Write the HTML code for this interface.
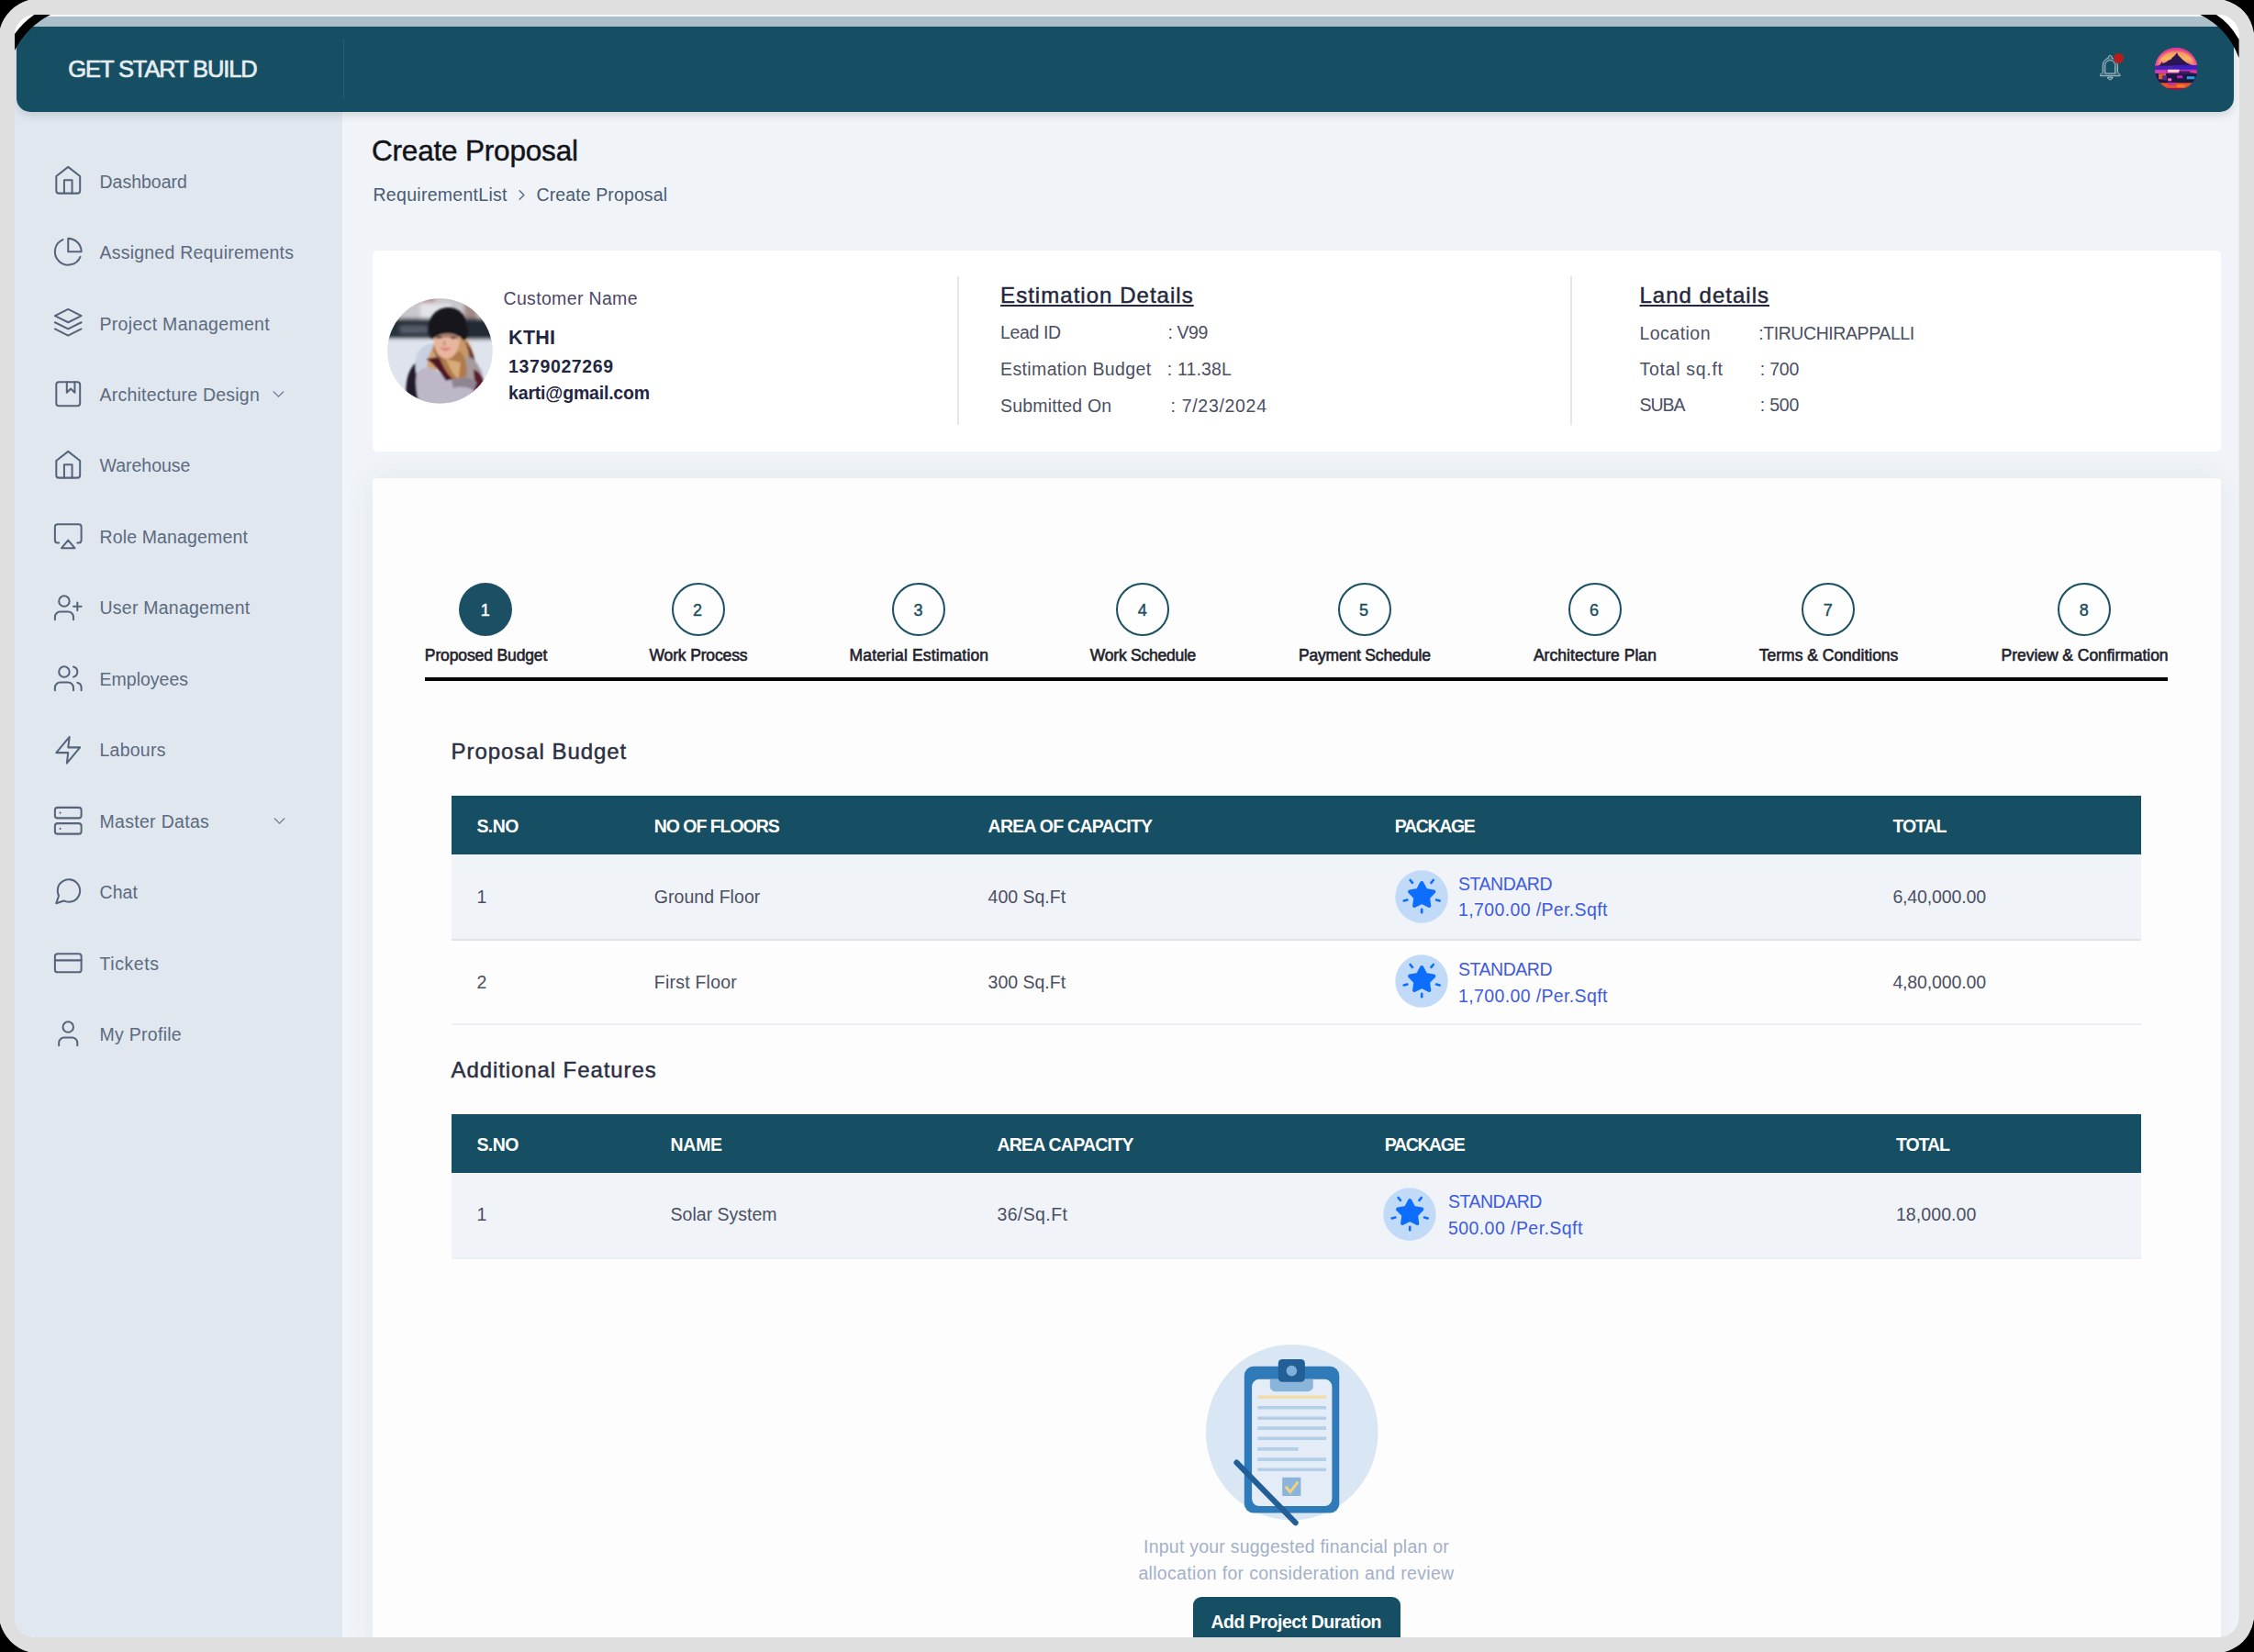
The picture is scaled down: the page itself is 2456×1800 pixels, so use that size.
<!DOCTYPE html>
<html lang="en"><head><meta charset="utf-8"><title>Create Proposal</title>
<style>
html,body{margin:0;padding:0}
body{width:2456px;height:1800px;overflow:hidden;background:#dfdfdf;position:relative;font-family:"Liberation Sans",sans-serif}
.abs,.t,.ic{position:absolute}
.t{white-space:pre;display:block}
</style></head>
<body>
<div class="abs" style="left:0;top:0;width:2456px;height:1800px;background:#dfdfdf"></div>
<svg class="abs" style="left:0;top:0" width="2456" height="1800" viewBox="0 0 2456 1800"><path d="M0,0 L31,0 A45.3,45.3 0 0 0 0,31 Z M2456,0 L2423.8,0 Q2451.1,8 2456,36 Z M0,1800 L0,1768.6 A45.3,45.3 0 0 0 31.3,1800 Z M2456,1800 L2456,1764.2 Q2451.1,1792 2424,1800 Z" fill="#000"/></svg>
<div class="abs" id="screen" style="left:0;top:0;width:2456px;height:1800px;clip-path:inset(16px 16.4px 16.1px 16px round 22px);">
<div class="abs" style="left:16.00px;top:16.00px;width:2424.00px;height:1768.00px;background:#f0f4f8;"></div>
<div class="abs" style="left:16.00px;top:16.00px;width:356.80px;height:1768.00px;background:#e0e7ef;"></div>
<div class="abs" style="left:16.00px;top:56.00px;width:2.00px;height:68.00px;background:#e0e7ef;"></div>
<div class="abs" style="left:2434.00px;top:56.00px;width:6.00px;height:68.00px;background:#f0f4f8;"></div>
<div class="abs" style="left:18.00px;top:16.00px;width:2416.00px;height:105.60px;background:linear-gradient(#f4f7fb 0,#f4f7fb 1.9px,#adc0ca 2.1px,#adc0ca 12.6px,#164f63 12.9px,#164f63 100%);border-radius:0 0 15px 15px;box-shadow:0 4px 8px rgba(40,52,70,.15);"></div>
<svg class="abs" style="left:0;top:0" width="2456" height="80" viewBox="0 0 2456 80"><polygon points="14,14 39,14 14,39" fill="#fff"/><polygon points="2442,14 2413,14 2442,44" fill="#fff"/><path d="M15,37 L16,37 Q24.8,24.8 37.3,16 L37.3,15 L55,15 L55,16 A90,90 0 0 0 16,55 L15,55 Z" fill="#000"/><path d="M2414.8,15 L2414.8,16 Q2429,24.7 2439.3,42.5 L2441,42.5 L2441,62.5 L2439.3,62.5 A85,85 0 0 0 2397.4,16 L2397.4,15 Z" fill="#000"/></svg>
<div class="abs" style="left:373.60px;top:42.90px;width:1.50px;height:65.10px;background:rgba(255,255,255,.09);"></div>
<svg class="abs" style="left:2283.2px;top:57.3px" width="32.5" height="32.5" viewBox="0 0 24 24" fill="#9fb8c2" fill-opacity=".28" stroke="#cddbe1" stroke-width="0.6" stroke-linejoin="round"><path d="M12 22c1.1 0 2-.9 2-2h-4c0 1.1.9 2 2 2zm6-6v-5c0-3.07-1.630-5.640-4.500-6.320V4c0-.83-.67-1.500-1.500-1.500s-1.500.67-1.500 1.500v.68C7.640 5.360 6 7.920 6 11v5l-2 2v1h16v-1l-2-2zm-2 1H8v-6c0-2.480 1.510-4.500 4-4.500s4 2.020 4 4.500v6z"/></svg>
<div class="abs" style="left:2302.6px;top:57.8px;width:11px;height:11px;border-radius:50%;background:#b81c1c"></div>
<svg class="abs" style="left:2348.00px;top:52.20px" width="46.40" height="46.40" viewBox="0 0 46 46">
<defs><clipPath id="pav"><circle cx="23" cy="23" r="23"/></clipPath>
<linearGradient id="pg1" x1="0" y1="0" x2="0" y2="1">
<stop offset="0" stop-color="#e84a90"/><stop offset="0.12" stop-color="#f59a5e"/><stop offset="0.26" stop-color="#fbb862"/>
<stop offset="0.40" stop-color="#f0707c"/><stop offset="0.46" stop-color="#5a25b8"/><stop offset="1" stop-color="#5a25b8"/></linearGradient>
<radialGradient id="pg2" gradientUnits="userSpaceOnUse" cx="23" cy="25" r="24"><stop offset="0.84" stop-color="#e6349a" stop-opacity="0"/><stop offset="1" stop-color="#e6349a" stop-opacity="1"/></radialGradient>
<filter id="bl3" x="-10%" y="-10%" width="120%" height="120%"><feGaussianBlur stdDeviation="0.55"/></filter></defs>
<g clip-path="url(#pav)"><rect width="46" height="46" fill="url(#pg1)"/>
<rect width="46" height="22" fill="url(#pg2)"/>
<g filter="url(#bl3)">
<polygon points="23.9,5.2 25,8 27,10 30,13 34,16 38,18 45.6,20.5 46,22 0,22 2.2,20.5 6,18 7.5,14.8 8.6,17 12,15.5 15,13.5 17,13 19,10.5 21,9 22.6,7" fill="#2c1852"/>
<rect x="-1" y="19.5" width="48" height="4.4" fill="#4a22b4"/>
<rect x="20" y="19" width="26" height="4" fill="#3d1cc4"/>
<rect x="-1" y="23.6" width="48" height="4.6" fill="#b431b8"/>
<rect x="0" y="24" width="12" height="4" fill="#cf3fae"/>
<rect x="14" y="23.6" width="12.4" height="3" fill="#fbd0c0"/>
<rect x="26" y="25.4" width="16" height="2.6" fill="#3a1a60"/>
<rect x="38" y="25" width="6" height="2" fill="#e8407c"/>
<rect x="-1" y="28" width="48" height="10.5" fill="#1c1440"/>
<rect x="4" y="28" width="8" height="6" fill="#d9603e"/>
<rect x="8" y="30" width="5" height="5" fill="#5a2a80"/>
<rect x="14" y="33" width="4" height="3" fill="#f06ad0"/>
<rect x="24" y="30" width="6" height="3" fill="#b02ab8"/>
<rect x="34.5" y="31" width="8.5" height="3" fill="#22a6e0"/>
<rect x="-1" y="38" width="48" height="6" fill="#e8522c"/>
<rect x="14" y="37.5" width="8" height="3" fill="#c030a0"/>
<rect x="24" y="40" width="8" height="3" fill="#fa7a2a"/>
<rect x="-1" y="43.5" width="48" height="4" fill="#8a1f4a"/>
</g></g></svg>
<svg class="ic" style="left:57.150000000000006px;top:179.25px" width="34.5" height="34.5" viewBox="0 0 24 24" fill="none" stroke="#55647a" stroke-width="1.4" stroke-linecap="round" stroke-linejoin="round"><path d="M3 9l9-7 9 7v11a2 2 0 0 1-2 2H5a2 2 0 0 1-2-2z"/><polyline points="9 22 9 12 15 12 15 22"/></svg>
<svg class="ic" style="left:57.150000000000006px;top:256.7px" width="34.5" height="34.5" viewBox="0 0 24 24" fill="none" stroke="#55647a" stroke-width="1.4" stroke-linecap="round" stroke-linejoin="round"><path d="M21.21 15.89A10 10 0 1 1 8 2.83"/><path d="M22 12A10 10 0 0 0 12 2v10z"/></svg>
<svg class="ic" style="left:57.150000000000006px;top:334.15000000000003px" width="34.5" height="34.5" viewBox="0 0 24 24" fill="none" stroke="#55647a" stroke-width="1.4" stroke-linecap="round" stroke-linejoin="round"><polygon points="12 2 2 7 12 12 22 7 12 2"/><polyline points="2 17 12 22 22 17"/><polyline points="2 12 12 17 22 12"/></svg>
<svg class="ic" style="left:57.150000000000006px;top:411.6px" width="34.5" height="34.5" viewBox="0 0 24 24" fill="none" stroke="#55647a" stroke-width="1.4" stroke-linecap="round" stroke-linejoin="round"><rect x="3" y="3" width="18" height="18" rx="2" ry="2"/><polyline points="11 3 11 11 14 8 17 11 17 3"/></svg>
<svg class="ic" style="left:57.150000000000006px;top:489.05px" width="34.5" height="34.5" viewBox="0 0 24 24" fill="none" stroke="#55647a" stroke-width="1.4" stroke-linecap="round" stroke-linejoin="round"><path d="M3 9l9-7 9 7v11a2 2 0 0 1-2 2H5a2 2 0 0 1-2-2z"/><polyline points="9 22 9 12 15 12 15 22"/></svg>
<svg class="ic" style="left:57.150000000000006px;top:566.5px" width="34.5" height="34.5" viewBox="0 0 24 24" fill="none" stroke="#55647a" stroke-width="1.4" stroke-linecap="round" stroke-linejoin="round"><path d="M5 17H4a2 2 0 0 1-2-2V5a2 2 0 0 1 2-2h16a2 2 0 0 1 2 2v10a2 2 0 0 1-2 2h-1"/><polygon points="12 15 17 21 7 21 12 15"/></svg>
<svg class="ic" style="left:57.150000000000006px;top:644.8500000000001px" width="34.5" height="34.5" viewBox="0 0 24 24" fill="none" stroke="#55647a" stroke-width="1.4" stroke-linecap="round" stroke-linejoin="round"><path d="M16 21v-2a4 4 0 0 0-4-4H6a4 4 0 0 0-4 4v2"/><circle cx="9" cy="7" r="4"/><line x1="19" y1="8" x2="19" y2="14"/><line x1="22" y1="11" x2="16" y2="11"/></svg>
<svg class="ic" style="left:57.150000000000006px;top:722.3px" width="34.5" height="34.5" viewBox="0 0 24 24" fill="none" stroke="#55647a" stroke-width="1.4" stroke-linecap="round" stroke-linejoin="round"><path d="M16 21v-2a4 4 0 0 0-4-4H6a4 4 0 0 0-4 4v2"/><circle cx="9" cy="7" r="4"/><path d="M22 21v-2a4 4 0 0 0-3-3.87"/><path d="M16 3.13a4 4 0 0 1 0 7.75"/></svg>
<svg class="ic" style="left:57.150000000000006px;top:799.75px" width="34.5" height="34.5" viewBox="0 0 24 24" fill="none" stroke="#55647a" stroke-width="1.4" stroke-linecap="round" stroke-linejoin="round"><polygon points="13 2 3 14 12 14 11 22 21 10 12 10 13 2"/></svg>
<svg class="ic" style="left:57.150000000000006px;top:876.6px" width="34.5" height="34.5" viewBox="0 0 24 24" fill="none" stroke="#55647a" stroke-width="1.4" stroke-linecap="round" stroke-linejoin="round"><rect x="2" y="2" width="20" height="8" rx="2" ry="2"/><rect x="2" y="14" width="20" height="8" rx="2" ry="2"/><line x1="6" y1="6" x2="6.01" y2="6"/><line x1="6" y1="18" x2="6.01" y2="18"/></svg>
<svg class="ic" style="left:57.150000000000006px;top:954.0500000000001px" width="34.5" height="34.5" viewBox="0 0 24 24" fill="none" stroke="#55647a" stroke-width="1.4" stroke-linecap="round" stroke-linejoin="round"><path d="M21 11.5a8.38 8.38 0 0 1-.9 3.8 8.5 8.5 0 0 1-7.6 4.7 8.38 8.38 0 0 1-3.8-.9L3 21l1.9-5.7a8.38 8.38 0 0 1-.9-3.8 8.5 8.5 0 0 1 4.7-7.6 8.38 8.38 0 0 1 3.8-.9h.5a8.48 8.48 0 0 1 8 8v.5z"/></svg>
<svg class="ic" style="left:57.150000000000006px;top:1031.5px" width="34.5" height="34.5" viewBox="0 0 24 24" fill="none" stroke="#55647a" stroke-width="1.4" stroke-linecap="round" stroke-linejoin="round"><rect x="2" y="5" width="20" height="14" rx="2"/><line x1="2" y1="10" x2="22" y2="10"/></svg>
<svg class="ic" style="left:57.150000000000006px;top:1108.95px" width="34.5" height="34.5" viewBox="0 0 24 24" fill="none" stroke="#55647a" stroke-width="1.4" stroke-linecap="round" stroke-linejoin="round"><path d="M19 21v-2a4 4 0 0 0-4-4H9a4 4 0 0 0-4 4v2"/><circle cx="12" cy="7" r="4"/></svg>
<svg class="ic" style="left:292.9px;top:419.3px" width="21" height="21" viewBox="0 0 24 24" fill="none" stroke="#6b7a8f" stroke-width="1.6" stroke-linecap="round" stroke-linejoin="round"><polyline points="6 9 12 15 18 9"/></svg>
<svg class="ic" style="left:293.6px;top:883.7px" width="21" height="21" viewBox="0 0 24 24" fill="none" stroke="#6b7a8f" stroke-width="1.6" stroke-linecap="round" stroke-linejoin="round"><polyline points="6 9 12 15 18 9"/></svg>
<svg class="ic" style="left:558.5px;top:202.9px" width="19" height="19" viewBox="0 0 24 24" fill="none" stroke="#5c6b80" stroke-width="1.8" stroke-linecap="round" stroke-linejoin="round"><polyline points="9 18 15 12 9 6"/></svg>
<div class="abs" style="left:405.60px;top:272.80px;width:2014.00px;height:218.90px;background:#fff;border-radius:5px;"></div>
<div class="abs" style="left:405.60px;top:521.00px;width:2014.00px;height:1279.00px;background:#fdfdfd;border-radius:4px 4px 0 0;box-shadow:0 0 34px rgba(50,70,110,.065);"></div>
<div class="abs" style="left:1043.00px;top:301.40px;width:1.60px;height:161.50px;background:#e2e6ef;"></div>
<div class="abs" style="left:1711.00px;top:301.40px;width:1.60px;height:161.50px;background:#e2e6ef;"></div>
<svg class="abs" style="left:422.00px;top:324.80px" width="114.80" height="114.80" viewBox="0 0 115 115">
<defs><clipPath id="cav"><circle cx="57.5" cy="57.5" r="57.3"/></clipPath>
<filter id="bl1" x="-20%" y="-20%" width="140%" height="140%"><feGaussianBlur stdDeviation="1.1"/></filter>
<filter id="bl2" x="-20%" y="-20%" width="140%" height="140%"><feGaussianBlur stdDeviation="2.2"/></filter></defs>
<g clip-path="url(#cav)">
<rect width="115" height="115" fill="#dde1ea"/>
<g filter="url(#bl2)">
<rect x="-5" y="-6" width="125" height="30" fill="#c9c6cc"/>
<rect x="22" y="-4" width="30" height="8" fill="#b98a8a"/>
<rect x="36" y="6" width="34" height="16" fill="#e2e4e8"/>
<rect x="84" y="2" width="14" height="40" fill="#a08a86"/>
<rect x="-5" y="22" width="58" height="22" fill="#27303b"/>
<rect x="14" y="30" width="30" height="8" fill="#595f6d"/>
<rect x="84" y="22" width="36" height="28" fill="#232c36"/>
<rect x="-5" y="45" width="125" height="75" fill="#dfe3ec"/>
</g>
<g filter="url(#bl1)">
<path d="M21 112 C19 92 22 76 34 68 L40 74 L36 112 Z" fill="#241a2b"/>
<path d="M74 36 C88 40 97 58 96 84 L80 88 L74 60 Z" fill="#c99868"/>
<path d="M84 46 C93 54 97 66 96 80 L89 78 C91 64 89 56 84 46 Z" fill="#6a3d30"/>
<path d="M52 48 C44 56 38 68 38 80 L54 78 L56 56 Z" fill="#d0a070"/>
<path d="M32 62 C36 52 46 48 52 50 C46 58 42 70 44 84 L34 90 C30 80 30 70 32 62 Z" fill="#c9d0e2"/>
<path d="M32 82 C40 72 50 74 60 84 C72 92 90 88 102 76 C108 90 104 106 92 118 L36 118 C32 106 30 94 32 82 Z" fill="#bdb7c7"/>
<path d="M86 62 C96 66 102 74 102 84 C98 90 90 92 84 90 Z" fill="#a59a9c"/>
<path d="M94 78 C102 80 107 88 105 100 C102 106 96 110 90 112 L96 96 Z" fill="#5a1c2c"/>
<path d="M42 66 C50 70 58 80 64 90 L74 88 C70 78 64 70 56 64 Z" fill="#4f1826"/>
<path d="M56 62 C60 74 66 84 74 90 L86 86 C88 76 86 66 80 58 Z" fill="#b07a4c"/>
<path d="M64 66 C68 76 72 84 78 88 L80 70 Z" fill="#d9ab78"/>
<path d="M70 90 C78 84 92 86 98 92 L94 100 C86 96 78 96 72 98 Z" fill="#8f8592"/>
<path d="M50 38 C50 30 78 30 79 40 C80 54 74 66 64 66 C55 66 50 52 50 38 Z" fill="#e8b59d"/>
<path d="M52 40 C58 37 70 37 78 41 L78 45 C70 42 58 42 52 45 Z" fill="#a9806c"/>
<ellipse cx="56.8" cy="42.6" rx="3" ry="1.3" fill="#4a3530"/><ellipse cx="72" cy="43" rx="3" ry="1.3" fill="#4a3530"/>
<path d="M62 44 L60.5 51 L64.5 51.5 Z" fill="#c99680"/>
<path d="M57 53 Q64 56.5 70 53 Q64 60.5 57 53 Z" fill="#d35f6e"/>
<path d="M50 50 C52 58 56 64 62 66 L56 66 C52 62 50 56 50 50 Z" fill="#8a5a40"/>
<path d="M46 40 C42 20 54 10 67 10 C80 10 90 22 88 40 C87 44 85 46 83 46 C76 36 58 36 50 44 C48 44 47 42 46 40 Z" fill="#15141b"/>
</g>
</g></svg>
<div class="abs" style="left:462.60px;top:738.00px;width:1899.60px;height:3.60px;background:#060606;"></div>
<div class="abs" style="left:500.20px;top:635.30px;width:58px;height:58px;border-radius:50%;background:#1b4f63"></div>
<div class="abs" style="left:731.60px;top:635.30px;width:58px;height:58px;box-sizing:border-box;border-radius:50%;border:2.1px solid #1b4f63;background:#fefefe"></div>
<div class="abs" style="left:971.90px;top:635.30px;width:58px;height:58px;box-sizing:border-box;border-radius:50%;border:2.1px solid #1b4f63;background:#fefefe"></div>
<div class="abs" style="left:1216.20px;top:635.30px;width:58px;height:58px;box-sizing:border-box;border-radius:50%;border:2.1px solid #1b4f63;background:#fefefe"></div>
<div class="abs" style="left:1457.60px;top:635.30px;width:58px;height:58px;box-sizing:border-box;border-radius:50%;border:2.1px solid #1b4f63;background:#fefefe"></div>
<div class="abs" style="left:1708.50px;top:635.30px;width:58px;height:58px;box-sizing:border-box;border-radius:50%;border:2.1px solid #1b4f63;background:#fefefe"></div>
<div class="abs" style="left:1963.20px;top:635.30px;width:58px;height:58px;box-sizing:border-box;border-radius:50%;border:2.1px solid #1b4f63;background:#fefefe"></div>
<div class="abs" style="left:2242.20px;top:635.30px;width:58px;height:58px;box-sizing:border-box;border-radius:50%;border:2.1px solid #1b4f63;background:#fefefe"></div>
<div class="abs" style="left:492.00px;top:867.40px;width:1841.00px;height:63.90px;background:#164f63;"></div>
<div class="abs" style="left:492.00px;top:931.30px;width:1841.00px;height:93.30px;background:#f0f4f8;box-sizing:border-box;border-bottom:2px solid #e0e4ea;"></div>
<div class="abs" style="left:492.00px;top:1024.60px;width:1841.00px;height:92.70px;background:transparent;box-sizing:border-box;border-bottom:2.5px solid #ebeef3;"></div>
<svg class="abs" style="left:1520.10px;top:947.60px" width="58" height="58" viewBox="-29 -29 58 58">
<circle cx="0" cy="0" r="28.7" fill="#c1daf8"/>
<polygon points="0.20,-15.00 4.43,-7.02 13.32,-5.46 7.05,1.02 8.31,9.96 0.20,6.00 -7.91,9.96 -6.65,1.02 -12.92,-5.46 -4.03,-7.02" fill="#0d6efd" stroke="#0d6efd" stroke-width="4" stroke-linejoin="round"/>
<g stroke="#0d6efd" stroke-width="2.6" stroke-linecap="round">
<line x1="-12.4" y1="-18" x2="-10" y2="-15.2"/><line x1="12.8" y1="-18" x2="10.4" y2="-15.2"/>
<line x1="-19.3" y1="4.4" x2="-15.6" y2="3.5"/><line x1="19.7" y1="4.4" x2="16" y2="3.5"/>
<line x1="0.2" y1="13.9" x2="0.2" y2="17.2"/>
</g></svg>
<svg class="abs" style="left:1520.10px;top:1040.40px" width="58" height="58" viewBox="-29 -29 58 58">
<circle cx="0" cy="0" r="28.7" fill="#c1daf8"/>
<polygon points="0.20,-15.00 4.43,-7.02 13.32,-5.46 7.05,1.02 8.31,9.96 0.20,6.00 -7.91,9.96 -6.65,1.02 -12.92,-5.46 -4.03,-7.02" fill="#0d6efd" stroke="#0d6efd" stroke-width="4" stroke-linejoin="round"/>
<g stroke="#0d6efd" stroke-width="2.6" stroke-linecap="round">
<line x1="-12.4" y1="-18" x2="-10" y2="-15.2"/><line x1="12.8" y1="-18" x2="10.4" y2="-15.2"/>
<line x1="-19.3" y1="4.4" x2="-15.6" y2="3.5"/><line x1="19.7" y1="4.4" x2="16" y2="3.5"/>
<line x1="0.2" y1="13.9" x2="0.2" y2="17.2"/>
</g></svg>
<div class="abs" style="left:492.00px;top:1213.90px;width:1841.00px;height:64.30px;background:#164f63;"></div>
<div class="abs" style="left:492.00px;top:1278.20px;width:1841.00px;height:94.00px;background:#f0f4f8;box-sizing:border-box;border-bottom:2.5px solid #ebeef3;"></div>
<svg class="abs" style="left:1507.30px;top:1294.40px" width="58" height="58" viewBox="-29 -29 58 58">
<circle cx="0" cy="0" r="28.7" fill="#c1daf8"/>
<polygon points="0.20,-15.00 4.43,-7.02 13.32,-5.46 7.05,1.02 8.31,9.96 0.20,6.00 -7.91,9.96 -6.65,1.02 -12.92,-5.46 -4.03,-7.02" fill="#0d6efd" stroke="#0d6efd" stroke-width="4" stroke-linejoin="round"/>
<g stroke="#0d6efd" stroke-width="2.6" stroke-linecap="round">
<line x1="-12.4" y1="-18" x2="-10" y2="-15.2"/><line x1="12.8" y1="-18" x2="10.4" y2="-15.2"/>
<line x1="-19.3" y1="4.4" x2="-15.6" y2="3.5"/><line x1="19.7" y1="4.4" x2="16" y2="3.5"/>
<line x1="0.2" y1="13.9" x2="0.2" y2="17.2"/>
</g></svg>
<svg class="abs" style="left:1300px;top:1460px" width="220" height="210" viewBox="1300 1460 220 210">
<ellipse cx="1407.8" cy="1560.6" rx="93.8" ry="95.7" fill="#d9e6f3"/>
<rect x="1355.8" y="1488.7" width="103.5" height="159.7" rx="10" fill="#2f7ab9"/>
<rect x="1364.1" y="1502.8" width="87.3" height="138.2" rx="8" fill="#e3ecf7"/>
<path d="M1383.8 1502.8h47v7.5a6 6 0 0 1-6 6h-35a6 6 0 0 1-6-6z" fill="#8bb4da"/>
<rect x="1392.8" y="1481" width="29.1" height="24.7" rx="4.5" fill="#215f96"/>
<circle cx="1407.4" cy="1493.6" r="5.8" fill="#7fb0dc"/>
<g stroke-width="3.6" stroke-linecap="butt">
<line x1="1370.4" y1="1522.3" x2="1445" y2="1522.3" stroke="#f3dcaa"/>
<g stroke="#b3cfe8">
<line x1="1370.4" y1="1533.7" x2="1445" y2="1533.7"/><line x1="1370.4" y1="1545.3" x2="1445" y2="1545.3"/>
<line x1="1370.4" y1="1556.1" x2="1445" y2="1556.1"/><line x1="1370.4" y1="1567.3" x2="1445" y2="1567.3"/>
<line x1="1370.4" y1="1578.9" x2="1414.5" y2="1578.9"/><line x1="1370.4" y1="1590.1" x2="1445" y2="1590.1"/>
<line x1="1370.4" y1="1601.3" x2="1445" y2="1601.3"/></g></g>
<rect x="1397.2" y="1609.8" width="20.2" height="20.2" fill="#8bb4da"/>
<polyline points="1400.8,1619.5 1405.8,1625.8 1414.2,1614.6" fill="none" stroke="#f0d283" stroke-width="3"/>
<line x1="1347.5" y1="1593.6" x2="1411.6" y2="1659.2" stroke="#215f96" stroke-width="6.2" stroke-linecap="round"/>
</svg>
<div class="abs" style="left:1299.80px;top:1739.70px;width:225.80px;height:60.30px;background:#164f63;border-radius:9px 9px 0 0;"></div>
<span class="t" id="t0" style="left:74.30px;top:63.21px;font-size:25.5px;line-height:25.5px;color:#e6edf0;letter-spacing:-1.108px;-webkit-text-stroke:0.45px currentColor;-webkit-text-stroke:0.7px currentColor;">GET START BUILD</span>
<span class="t" id="t1" style="left:108.50px;top:188.69px;font-size:19.5px;line-height:19.5px;color:#5c6b80;letter-spacing:-0.013px;">Dashboard</span>
<span class="t" id="t2" style="left:108.50px;top:266.14px;font-size:19.5px;line-height:19.5px;color:#5c6b80;letter-spacing:0.223px;">Assigned Requirements</span>
<span class="t" id="t3" style="left:108.50px;top:343.59px;font-size:19.5px;line-height:19.5px;color:#5c6b80;letter-spacing:0.310px;">Project Management</span>
<span class="t" id="t4" style="left:108.50px;top:421.04px;font-size:19.5px;line-height:19.5px;color:#5c6b80;letter-spacing:0.229px;">Architecture Design</span>
<span class="t" id="t5" style="left:108.50px;top:498.49px;font-size:19.5px;line-height:19.5px;color:#5c6b80;letter-spacing:-0.012px;">Warehouse</span>
<span class="t" id="t6" style="left:108.50px;top:575.94px;font-size:19.5px;line-height:19.5px;color:#5c6b80;letter-spacing:0.140px;">Role Management</span>
<span class="t" id="t7" style="left:108.50px;top:653.39px;font-size:19.5px;line-height:19.5px;color:#5c6b80;letter-spacing:0.234px;">User Management</span>
<span class="t" id="t8" style="left:108.50px;top:730.84px;font-size:19.5px;line-height:19.5px;color:#5c6b80;letter-spacing:0.016px;">Employees</span>
<span class="t" id="t9" style="left:108.50px;top:808.29px;font-size:19.5px;line-height:19.5px;color:#5c6b80;letter-spacing:0.239px;">Labours</span>
<span class="t" id="t10" style="left:108.50px;top:885.74px;font-size:19.5px;line-height:19.5px;color:#5c6b80;letter-spacing:0.304px;">Master Datas</span>
<span class="t" id="t11" style="left:108.50px;top:963.19px;font-size:19.5px;line-height:19.5px;color:#5c6b80;letter-spacing:0.066px;">Chat</span>
<span class="t" id="t12" style="left:108.50px;top:1040.64px;font-size:19.5px;line-height:19.5px;color:#5c6b80;letter-spacing:0.559px;">Tickets</span>
<span class="t" id="t13" style="left:108.50px;top:1118.09px;font-size:19.5px;line-height:19.5px;color:#5c6b80;letter-spacing:0.279px;">My Profile</span>
<span class="t" id="t14" style="left:405.00px;top:149.34px;font-size:31.5px;line-height:31.5px;color:#111318;letter-spacing:-0.188px;-webkit-text-stroke:0.45px currentColor;">Create Proposal</span>
<span class="t" id="t15" style="left:406.50px;top:203.49px;font-size:19.5px;line-height:19.5px;color:#4a5b72;letter-spacing:0.287px;">RequirementList</span>
<span class="t" id="t16" style="left:584.50px;top:203.49px;font-size:19.5px;line-height:19.5px;color:#4a5b72;letter-spacing:0.113px;">Create Proposal</span>
<span class="t" id="t17" style="left:548.50px;top:315.99px;font-size:19.5px;line-height:19.5px;color:#4a4766;letter-spacing:0.336px;">Customer Name</span>
<span class="t" id="t18" style="left:554.10px;top:357.90px;font-size:21.5px;line-height:21.5px;color:#1f2743;letter-spacing:0.276px;font-weight:700;">KTHI</span>
<span class="t" id="t19" style="left:554.10px;top:389.69px;font-size:19.5px;line-height:19.5px;color:#1f2743;letter-spacing:0.616px;font-weight:700;">1379027269</span>
<span class="t" id="t20" style="left:554.10px;top:419.09px;font-size:19.5px;line-height:19.5px;color:#1f2743;letter-spacing:-0.190px;font-weight:700;">karti@gmail.com</span>
<span class="t" id="t21" style="left:1090.10px;top:309.88px;font-size:24px;line-height:24px;color:#23273b;letter-spacing:1.031px;-webkit-text-stroke:0.45px currentColor;text-decoration:underline;text-decoration-thickness:1.6px;text-underline-offset:1.8px;">Estimation Details</span>
<span class="t" id="t22" style="left:1090.10px;top:353.49px;font-size:19.5px;line-height:19.5px;color:#4b4f63;letter-spacing:-0.385px;">Lead ID</span>
<span class="t" id="t23" style="left:1272.40px;top:353.49px;font-size:19.5px;line-height:19.5px;color:#4b4f63;letter-spacing:-0.387px;">: V99</span>
<span class="t" id="t24" style="left:1090.10px;top:392.89px;font-size:19.5px;line-height:19.5px;color:#4b4f63;letter-spacing:0.358px;">Estimation Budget</span>
<span class="t" id="t25" style="left:1271.80px;top:392.89px;font-size:19.5px;line-height:19.5px;color:#4b4f63;letter-spacing:0.138px;">: 11.38L</span>
<span class="t" id="t26" style="left:1090.10px;top:432.69px;font-size:19.5px;line-height:19.5px;color:#4b4f63;letter-spacing:0.161px;">Submitted On</span>
<span class="t" id="t27" style="left:1275.50px;top:432.69px;font-size:19.5px;line-height:19.5px;color:#4b4f63;letter-spacing:0.691px;">: 7/23/2024</span>
<span class="t" id="t28" style="left:1786.50px;top:310.28px;font-size:24px;line-height:24px;color:#23273b;letter-spacing:1.006px;-webkit-text-stroke:0.45px currentColor;text-decoration:underline;text-decoration-thickness:1.6px;text-underline-offset:1.8px;">Land details</span>
<span class="t" id="t29" style="left:1786.50px;top:353.59px;font-size:19.5px;line-height:19.5px;color:#4b4f63;letter-spacing:0.467px;">Location</span>
<span class="t" id="t30" style="left:1916.20px;top:353.59px;font-size:19.5px;line-height:19.5px;color:#4b4f63;letter-spacing:-0.418px;">:TIRUCHIRAPPALLI</span>
<span class="t" id="t31" style="left:1786.50px;top:392.99px;font-size:19.5px;line-height:19.5px;color:#4b4f63;letter-spacing:0.703px;">Total sq.ft</span>
<span class="t" id="t32" style="left:1917.80px;top:392.99px;font-size:19.5px;line-height:19.5px;color:#4b4f63;letter-spacing:-0.219px;">: 700</span>
<span class="t" id="t33" style="left:1786.50px;top:432.39px;font-size:19.5px;line-height:19.5px;color:#4b4f63;letter-spacing:-1.036px;">SUBA</span>
<span class="t" id="t34" style="left:1917.80px;top:432.39px;font-size:19.5px;line-height:19.5px;color:#4b4f63;letter-spacing:-0.219px;">: 500</span>
<span class="t" id="t35" style="left:462.85px;top:705.69px;font-size:17.5px;line-height:17.5px;color:#22222c;letter-spacing:-0.125px;-webkit-text-stroke:0.45px currentColor;-webkit-text-stroke:0.6px currentColor;">Proposed Budget</span>
<span class="t" id="t36" style="left:523.70px;top:656.16px;font-size:18px;line-height:18px;color:#ffffff;letter-spacing:0.000px;-webkit-text-stroke:0.45px currentColor;">1</span>
<span class="t" id="t37" style="left:707.50px;top:705.69px;font-size:17.5px;line-height:17.5px;color:#22222c;letter-spacing:-0.145px;-webkit-text-stroke:0.45px currentColor;-webkit-text-stroke:0.6px currentColor;">Work Process</span>
<span class="t" id="t38" style="left:755.10px;top:656.16px;font-size:18px;line-height:18px;color:#1b4f63;letter-spacing:0.000px;-webkit-text-stroke:0.45px currentColor;">2</span>
<span class="t" id="t39" style="left:925.55px;top:705.69px;font-size:17.5px;line-height:17.5px;color:#22222c;letter-spacing:0.149px;-webkit-text-stroke:0.45px currentColor;-webkit-text-stroke:0.6px currentColor;">Material Estimation</span>
<span class="t" id="t40" style="left:995.40px;top:656.16px;font-size:18px;line-height:18px;color:#1b4f63;letter-spacing:0.000px;-webkit-text-stroke:0.45px currentColor;">3</span>
<span class="t" id="t41" style="left:1187.85px;top:705.69px;font-size:17.5px;line-height:17.5px;color:#22222c;letter-spacing:-0.238px;-webkit-text-stroke:0.45px currentColor;-webkit-text-stroke:0.6px currentColor;">Work Schedule</span>
<span class="t" id="t42" style="left:1239.70px;top:656.16px;font-size:18px;line-height:18px;color:#1b4f63;letter-spacing:0.000px;-webkit-text-stroke:0.45px currentColor;">4</span>
<span class="t" id="t43" style="left:1415.00px;top:705.69px;font-size:17.5px;line-height:17.5px;color:#22222c;letter-spacing:-0.194px;-webkit-text-stroke:0.45px currentColor;-webkit-text-stroke:0.6px currentColor;">Payment Schedule</span>
<span class="t" id="t44" style="left:1481.10px;top:656.16px;font-size:18px;line-height:18px;color:#1b4f63;letter-spacing:0.000px;-webkit-text-stroke:0.45px currentColor;">5</span>
<span class="t" id="t45" style="left:1670.90px;top:705.69px;font-size:17.5px;line-height:17.5px;color:#22222c;letter-spacing:0.046px;-webkit-text-stroke:0.45px currentColor;-webkit-text-stroke:0.6px currentColor;">Architecture Plan</span>
<span class="t" id="t46" style="left:1732.00px;top:656.16px;font-size:18px;line-height:18px;color:#1b4f63;letter-spacing:0.000px;-webkit-text-stroke:0.45px currentColor;">6</span>
<span class="t" id="t47" style="left:1916.85px;top:705.69px;font-size:17.5px;line-height:17.5px;color:#22222c;letter-spacing:-0.014px;-webkit-text-stroke:0.45px currentColor;-webkit-text-stroke:0.6px currentColor;">Terms &amp; Conditions</span>
<span class="t" id="t48" style="left:1986.70px;top:656.16px;font-size:18px;line-height:18px;color:#1b4f63;letter-spacing:0.000px;-webkit-text-stroke:0.45px currentColor;">7</span>
<span class="t" id="t49" style="left:2180.60px;top:705.69px;font-size:17.5px;line-height:17.5px;color:#22222c;letter-spacing:-0.041px;-webkit-text-stroke:0.45px currentColor;-webkit-text-stroke:0.6px currentColor;">Preview &amp; Confirmation</span>
<span class="t" id="t50" style="left:2265.70px;top:656.16px;font-size:18px;line-height:18px;color:#1b4f63;letter-spacing:0.000px;-webkit-text-stroke:0.45px currentColor;">8</span>
<span class="t" id="t51" style="left:491.50px;top:807.18px;font-size:24px;line-height:24px;color:#2b2f42;letter-spacing:0.952px;-webkit-text-stroke:0.45px currentColor;">Proposal Budget</span>
<span class="t" id="t52" style="left:519.40px;top:890.79px;font-size:19.5px;line-height:19.5px;color:#ffffff;letter-spacing:-0.562px;font-weight:700;">S.NO</span>
<span class="t" id="t53" style="left:712.80px;top:890.79px;font-size:19.5px;line-height:19.5px;color:#ffffff;letter-spacing:-1.038px;font-weight:700;">NO OF FLOORS</span>
<span class="t" id="t54" style="left:1076.60px;top:890.79px;font-size:19.5px;line-height:19.5px;color:#ffffff;letter-spacing:-0.745px;font-weight:700;">AREA OF CAPACITY</span>
<span class="t" id="t55" style="left:1519.80px;top:890.79px;font-size:19.5px;line-height:19.5px;color:#ffffff;letter-spacing:-1.344px;font-weight:700;">PACKAGE</span>
<span class="t" id="t56" style="left:2062.40px;top:890.79px;font-size:19.5px;line-height:19.5px;color:#ffffff;letter-spacing:-1.047px;font-weight:700;">TOTAL</span>
<span class="t" id="t57" style="left:519.50px;top:968.09px;font-size:19.5px;line-height:19.5px;color:#4b4f63;letter-spacing:0.000px;">1</span>
<span class="t" id="t58" style="left:712.80px;top:968.09px;font-size:19.5px;line-height:19.5px;color:#4b4f63;letter-spacing:0.055px;">Ground Floor</span>
<span class="t" id="t59" style="left:1076.60px;top:968.09px;font-size:19.5px;line-height:19.5px;color:#4b4f63;letter-spacing:-0.008px;">400 Sq.Ft</span>
<span class="t" id="t60" style="left:2062.40px;top:968.09px;font-size:19.5px;line-height:19.5px;color:#4b4f63;letter-spacing:-0.142px;">6,40,000.00</span>
<span class="t" id="t61" style="left:1589.00px;top:953.99px;font-size:19.5px;line-height:19.5px;color:#3f5be0;letter-spacing:-0.473px;">STANDARD</span>
<span class="t" id="t62" style="left:1589.00px;top:982.39px;font-size:19.5px;line-height:19.5px;color:#3f5be0;letter-spacing:0.369px;">1,700.00 /Per.Sqft</span>
<span class="t" id="t63" style="left:519.50px;top:1061.39px;font-size:19.5px;line-height:19.5px;color:#4b4f63;letter-spacing:0.000px;">2</span>
<span class="t" id="t64" style="left:712.80px;top:1061.39px;font-size:19.5px;line-height:19.5px;color:#4b4f63;letter-spacing:0.225px;">First Floor</span>
<span class="t" id="t65" style="left:1076.60px;top:1061.39px;font-size:19.5px;line-height:19.5px;color:#4b4f63;letter-spacing:-0.008px;">300 Sq.Ft</span>
<span class="t" id="t66" style="left:2062.40px;top:1061.39px;font-size:19.5px;line-height:19.5px;color:#4b4f63;letter-spacing:-0.142px;">4,80,000.00</span>
<span class="t" id="t67" style="left:1589.00px;top:1047.29px;font-size:19.5px;line-height:19.5px;color:#3f5be0;letter-spacing:-0.473px;">STANDARD</span>
<span class="t" id="t68" style="left:1589.00px;top:1075.69px;font-size:19.5px;line-height:19.5px;color:#3f5be0;letter-spacing:0.369px;">1,700.00 /Per.Sqft</span>
<span class="t" id="t69" style="left:491.50px;top:1154.08px;font-size:24px;line-height:24px;color:#2b2f42;letter-spacing:0.911px;-webkit-text-stroke:0.45px currentColor;">Additional Features</span>
<span class="t" id="t70" style="left:519.40px;top:1237.89px;font-size:19.5px;line-height:19.5px;color:#ffffff;letter-spacing:-0.562px;font-weight:700;">S.NO</span>
<span class="t" id="t71" style="left:730.60px;top:1237.89px;font-size:19.5px;line-height:19.5px;color:#ffffff;letter-spacing:-0.307px;font-weight:700;">NAME</span>
<span class="t" id="t72" style="left:1086.40px;top:1237.89px;font-size:19.5px;line-height:19.5px;color:#ffffff;letter-spacing:-0.764px;font-weight:700;">AREA CAPACITY</span>
<span class="t" id="t73" style="left:1508.70px;top:1237.89px;font-size:19.5px;line-height:19.5px;color:#ffffff;letter-spacing:-1.344px;font-weight:700;">PACKAGE</span>
<span class="t" id="t74" style="left:2065.90px;top:1237.89px;font-size:19.5px;line-height:19.5px;color:#ffffff;letter-spacing:-1.047px;font-weight:700;">TOTAL</span>
<span class="t" id="t75" style="left:519.50px;top:1314.49px;font-size:19.5px;line-height:19.5px;color:#4b4f63;letter-spacing:0.000px;">1</span>
<span class="t" id="t76" style="left:730.60px;top:1314.49px;font-size:19.5px;line-height:19.5px;color:#4b4f63;letter-spacing:0.004px;">Solar System</span>
<span class="t" id="t77" style="left:1086.40px;top:1314.49px;font-size:19.5px;line-height:19.5px;color:#4b4f63;letter-spacing:0.397px;">36/Sq.Ft</span>
<span class="t" id="t78" style="left:2065.90px;top:1314.49px;font-size:19.5px;line-height:19.5px;color:#4b4f63;letter-spacing:0.092px;">18,000.00</span>
<span class="t" id="t79" style="left:1577.90px;top:1299.79px;font-size:19.5px;line-height:19.5px;color:#3f5be0;letter-spacing:-0.473px;">STANDARD</span>
<span class="t" id="t80" style="left:1577.90px;top:1328.69px;font-size:19.5px;line-height:19.5px;color:#3f5be0;letter-spacing:0.443px;">500.00 /Per.Sqft</span>
<span class="t" id="t81" style="left:1246.00px;top:1675.59px;font-size:19.5px;line-height:19.5px;color:#a3b0c8;letter-spacing:0.234px;">Input your suggested financial plan or</span>
<span class="t" id="t82" style="left:1240.40px;top:1704.69px;font-size:19.5px;line-height:19.5px;color:#a3b0c8;letter-spacing:0.318px;">allocation for consideration and review</span>
<span class="t" id="t83" style="left:1319.50px;top:1758.49px;font-size:19.5px;line-height:19.5px;color:#ffffff;letter-spacing:-0.475px;font-weight:700;">Add Project Duration</span>
</div>
</body></html>
